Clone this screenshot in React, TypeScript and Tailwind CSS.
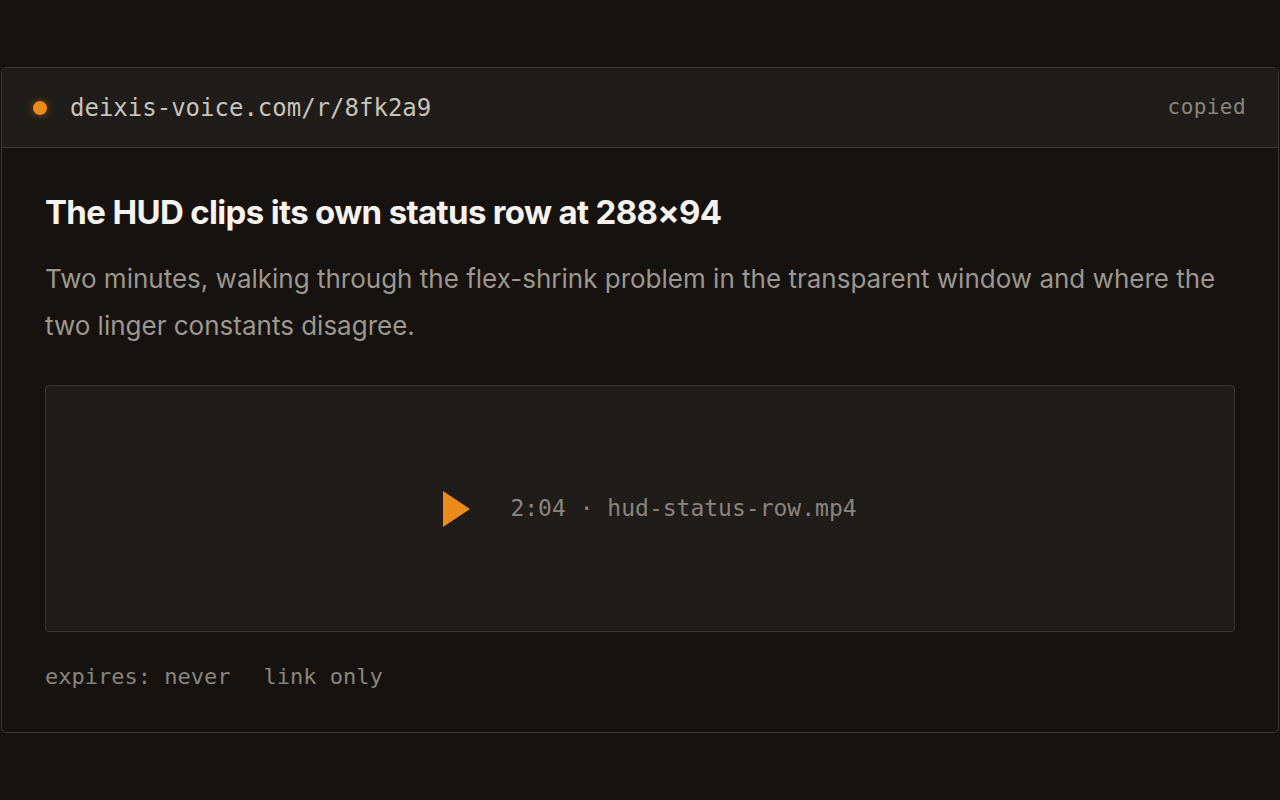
const mono = "font-['DejaVu_Sans_Mono','Liberation_Mono',monospace]";

export default function App() {
  return (
    <div className="min-h-screen bg-[#151210] flex items-center font-['Inter','Noto_Sans',sans-serif]">
      <div className="mx-px w-full rounded-[5px] border border-[#3a3633] bg-[#151210] overflow-hidden">
        {/* link bar */}
        <div className="flex items-center justify-between h-20 pl-[31px] pr-8 bg-[#1f1c19] border-b border-[#3a3633]">
          <div className="flex items-center gap-[23px]">
            <span className="w-3.5 h-3.5 rounded-full bg-[#ec8a1c] shadow-[0_0_8px_rgba(236,138,28,0.45)]" />
            <span className={`${mono} text-[24px] text-[#c9c3bb]`}>deixis-voice.com/r/8fk2a9</span>
          </div>
          <span className={`${mono} text-[21px] text-[#8a847d] tracking-[0.02em]`}>copied</span>
        </div>

        <div className="px-[43px] pt-[44px] pb-[39px]">
          <h1 className="text-[33px] leading-[40px] font-bold tracking-[-0.02em] text-[#f6f3ef]">
            The HUD clips its own status row at 288×94
          </h1>
          <p className="mt-[23px] text-[26px] leading-[47px] text-[#9d978f]">
            Two minutes, walking through the flex-shrink problem in the transparent window and where the two linger
            constants disagree.
          </p>

          {/* video */}
          <div className="mt-[36px] h-[247px] pl-5 rounded-[4px] border border-[#3a3633] bg-[#1f1c19] flex items-center justify-center gap-10">
            <svg width="27" height="36" viewBox="0 0 27 36">
              <path d="M0 0 L27 18 L0 36 Z" fill="#ec8a1c" />
            </svg>
            <span className={`${mono} text-[23px] text-[#8a847d]`}>2:04 · hud-status-row.mp4</span>
          </div>

          <div className={`mt-[28px] flex gap-[33px] ${mono} text-[22px] text-[#8a847d]`}>
            <span>expires: never</span>
            <span>link only</span>
          </div>
        </div>
      </div>
    </div>
  );
}
